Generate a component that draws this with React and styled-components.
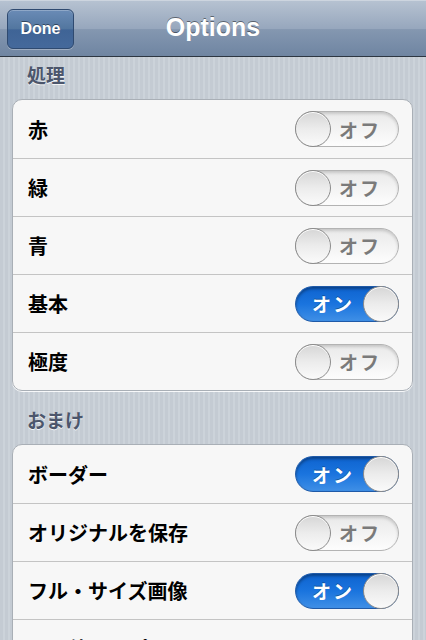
import React from 'react';
import styled, { createGlobalStyle } from 'styled-components';

const GlobalStyle = createGlobalStyle`
  html, body {
    margin: 0;
    padding: 0;
  }
  body {
    width: 426px;
    height: 640px;
    overflow: hidden;
    font-family: "Liberation Sans", "Noto Sans CJK JP", sans-serif;
    background: #c5ccd4;
  }
`;

const Screen = styled.div`
  width: 426px;
  height: 640px;
  overflow: hidden;
  display: flex;
  flex-direction: column;
  background: repeating-linear-gradient(90deg, #c4cbd3 0 3px, #ccd3da 3px 5px);
`;

const NavBar = styled.div`
  position: relative;
  flex: 0 0 auto;
  height: 57px;
  display: flex;
  align-items: center;
  justify-content: center;
  background: linear-gradient(#b6c2d1 0%, #97a7bd 50%, #8497b0 52%, #6f85a2 100%);
  border-top: 1px solid #cdd5df;
  border-bottom: 1px solid #2d3642;
  box-sizing: border-box;
`;

const Title = styled.div`
  font: bold 25px "Liberation Sans", "Noto Sans", sans-serif;
  color: #fff;
  text-shadow: 0 -1px 0 rgba(0, 0, 0, 0.45);
  margin-top: -2px;
`;

const DoneButton = styled.button`
  position: absolute;
  left: 7px;
  top: 8px;
  width: 67px;
  height: 40px;
  border-radius: 6px;
  border: 1px solid #2f4a70;
  background: linear-gradient(#6a8bb6 0%, #52769f 50%, #3f6496 52%, #45699b 100%);
  box-shadow: 0 1px 0 rgba(255, 255, 255, 0.3), inset 0 1px 0 rgba(255, 255, 255, 0.25);
  color: #fff;
  font: bold 16px "Liberation Sans", sans-serif;
  text-shadow: 0 -1px 0 rgba(0, 0, 0, 0.45);
  padding: 0;
`;

const Content = styled.div`
  display: flex;
  flex-direction: column;
  padding: 0 13px 0 12px;
`;

const SectionHeader = styled.div`
  height: 42px;
  padding: 0 0 8px 15px;
  box-sizing: border-box;
  display: flex;
  align-items: center;
  font: bold 19px "Noto Sans CJK JP", sans-serif;
  color: #4c566c;
  text-shadow: 0 1px 0 rgba(255, 255, 255, 0.8);
`;

const Group = styled.div`
  background: #f7f7f7;
  border: 1px solid #a9afb6;
  border-radius: 10px;
  box-shadow: 0 1px 0 rgba(255, 255, 255, 0.85);
  overflow: hidden;
  margin-bottom: 11px;
`;

const Row = styled.div`
  height: 58px;
  display: flex;
  align-items: center;
  justify-content: space-between;
  padding: 0 13px 0 15px;
  box-sizing: border-box;
  & + & {
    border-top: 1px solid #c4c4c4;
  }
`;

const Label = styled.div`
  font: bold 20px "Noto Sans CJK JP", sans-serif;
  color: #000;
`;

const Switch = styled.div`
  position: relative;
  width: 104px;
  height: 36px;
  border-radius: 18px;
  box-sizing: border-box;
  display: flex;
  align-items: center;
  justify-content: ${p => (p.$on ? 'flex-start' : 'flex-end')};
  padding: ${p => (p.$on ? '0 0 0 16px' : '0 17px 0 0')};
  border: 1px solid ${p => (p.$on ? '#1f5aa8' : '#b3b3b3')};
  background: ${p =>
    p.$on
      ? 'linear-gradient(#0e63cf 0%, #1a74de 50%, #3f8fe6 100%)'
      : 'linear-gradient(#e9e9e9 0%, #f3f3f3 50%, #fdfdfd 100%)'};
  box-shadow: inset 0 2px 3px rgba(0, 0, 0, ${p => (p.$on ? 0.35 : 0.15)});
`;

const SwitchText = styled.span`
  font: bold 19px "Noto Sans CJK JP", sans-serif;
  color: ${p => (p.$on ? '#fff' : '#7a7a7a')};
  text-shadow: ${p => (p.$on ? '0 -1px 0 rgba(0,0,0,0.3)' : 'none')};
  letter-spacing: 2px;
`;

const Knob = styled.div`
  position: absolute;
  top: -1px;
  ${p => (p.$on ? 'right: -1px;' : 'left: -1px;')}
  width: 36px;
  height: 36px;
  border-radius: 50%;
  box-sizing: border-box;
  border: 1px solid #8c8c8c;
  background: linear-gradient(#d6d6d6 0%, #ececec 50%, #fafafa 100%);
  box-shadow: inset 0 1px 0 #fff;
`;

const Toggle = ({ on }) => (
  <Switch $on={on}>
    <SwitchText $on={on}>{on ? 'オン' : 'オフ'}</SwitchText>
    <Knob $on={on} />
  </Switch>
);

const sections = [
  {
    title: '処理',
    rows: [
      { label: '赤', on: false },
      { label: '緑', on: false },
      { label: '青', on: false },
      { label: '基本', on: true },
      { label: '極度', on: false },
    ],
  },
  {
    title: 'おまけ',
    rows: [
      { label: 'ボーダー', on: true },
      { label: 'オリジナルを保存', on: false },
      { label: 'フル・サイズ画像', on: true },
      { label: 'その他のアプリ' },
    ],
  },
];

export default function App() {
  return (
    <Screen>
      <GlobalStyle />
      <NavBar>
        <DoneButton>Done</DoneButton>
        <Title>Options</Title>
      </NavBar>
      <Content>
        {sections.map(section => (
          <React.Fragment key={section.title}>
            <SectionHeader>{section.title}</SectionHeader>
            <Group>
              {section.rows.map(row => (
                <Row key={row.label}>
                  <Label>{row.label}</Label>
                  {row.on !== undefined && <Toggle on={row.on} />}
                </Row>
              ))}
            </Group>
          </React.Fragment>
        ))}
      </Content>
    </Screen>
  );
}
